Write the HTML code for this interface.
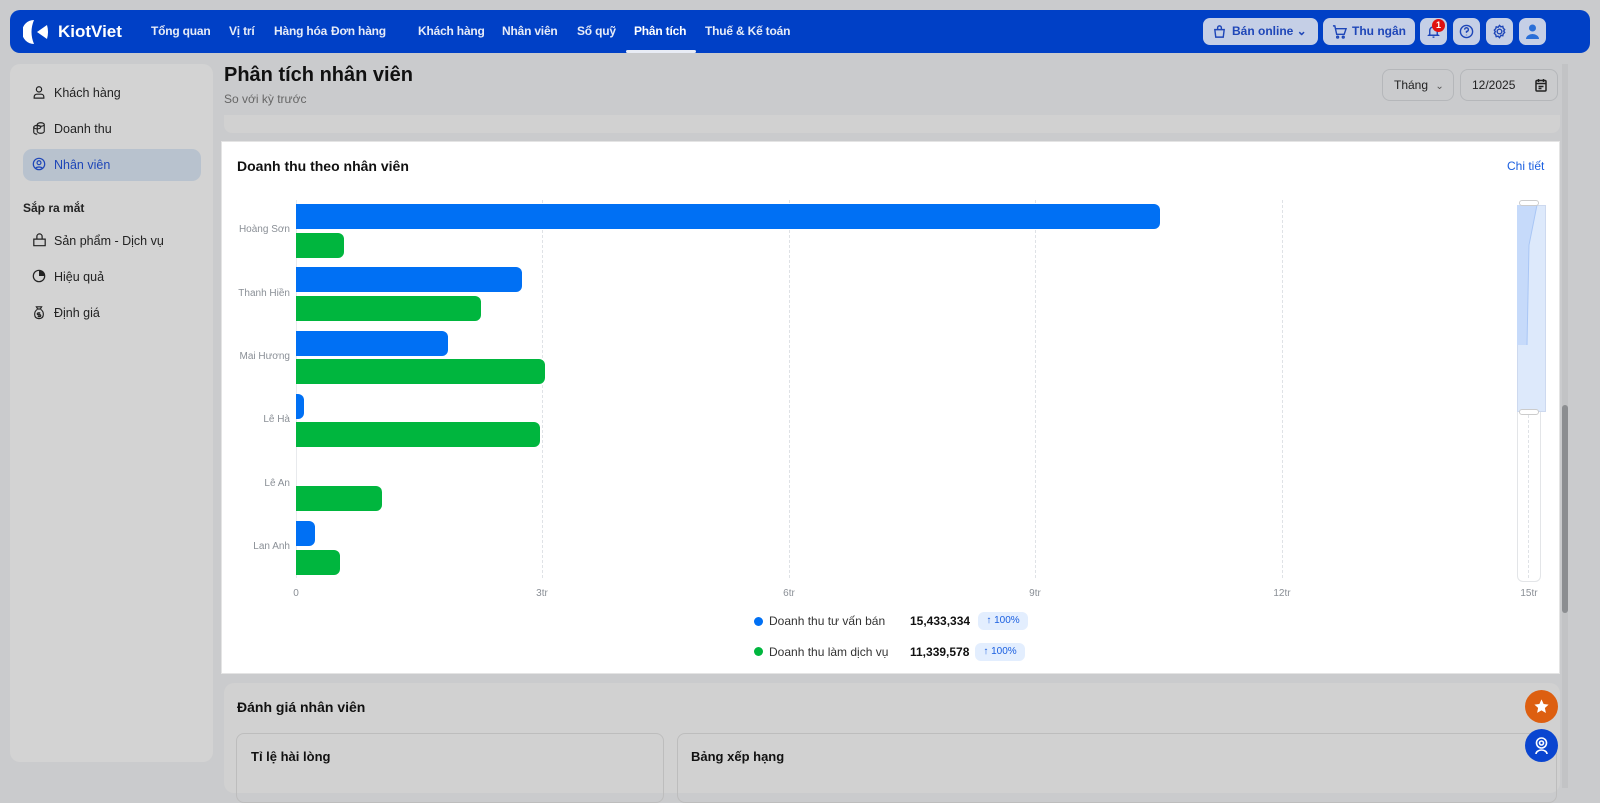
<!DOCTYPE html>
<html><head><meta charset="utf-8">
<style>
*{box-sizing:border-box;margin:0;padding:0}
body{width:1600px;height:788px;overflow:hidden;background:#cacbcd;font-family:"Liberation Sans",Arial,sans-serif;position:relative;color:#111}
.a{position:absolute}
.hdr{left:10px;top:10px;width:1580px;height:43px;background:#0040c6;border-radius:10px}
.nav{top:0;height:43px;line-height:43px;color:#e6ebf7;font-size:12px;font-weight:bold;white-space:nowrap;letter-spacing:-0.2px}
.btn{top:8px;height:27px;background:#c5cfe6;border-radius:7px;color:#1e46b8;font-size:12px;font-weight:bold;line-height:27px;white-space:nowrap}
.side{left:10px;top:64px;width:203px;height:698px;background:#d3d3d3;border-radius:10px}
.si{left:23px;font-size:12.5px;color:#222;height:32px;line-height:32px;padding-left:31px;width:178px}
.si svg{position:absolute;left:9px;top:8px}
.card{left:221px;top:141px;width:1339px;height:533px;background:#fff;border:1px solid #e4e4e4}
.grid{top:200px;width:0;height:378px;border-left:1px dashed #dfe2e6}
.bar{height:25px;border-radius:0 6px 6px 0}
.b{background:#0070f4}.g{background:#00b63e}
.lbl{width:70px;text-align:right;font-size:10px;color:#8a8f96}
.tick{top:588px;font-size:10px;color:#8a8f96;width:40px;text-align:center}
</style></head><body>
<div class="a hdr">
  <svg class="a" style="left:13px;top:8px" width="28" height="28" viewBox="0 0 28 28"><path d="M11 2 A12 12 0 1 0 11 26 Q6 14 11 2Z" fill="#fff"/><path d="M24 7 L14 14 L24 21 Q26 14 24 7Z" fill="#fff"/></svg>
  <div class="a nav" style="left:48px;font-size:17px;color:#fff;letter-spacing:0">KiotViet</div>
  <div class="a nav" style="left:141px">Tổng quan</div>
  <div class="a nav" style="left:219px">Vị trí</div>
  <div class="a nav" style="left:264px">Hàng hóa</div>
  <div class="a nav" style="left:321px">Đơn hàng</div>
  <div class="a nav" style="left:408px">Khách hàng</div>
  <div class="a nav" style="left:492px">Nhân viên</div>
  <div class="a nav" style="left:567px">Sổ quỹ</div>
  <div class="a nav" style="left:624px;color:#fff">Phân tích</div>
  <div class="a" style="left:616px;top:40px;width:70px;height:3px;background:#e8ecf5;border-radius:2px"></div>
  <div class="a nav" style="left:695px">Thuế &amp; Kế toán</div>
  <div class="a btn" style="left:1193px;width:115px;padding-left:29px">Bán online ⌄<svg class="a" style="left:9px;top:6px" width="15" height="15" viewBox="0 0 16 16" fill="none" stroke="#1e46b8" stroke-width="1.5"><path d="M3 6h10l-1 8H4z"/><path d="M6 6V4a2 2 0 0 1 4 0v2"/></svg></div>
  <div class="a btn" style="left:1313px;width:92px;padding-left:29px">Thu ngân<svg class="a" style="left:9px;top:6px" width="15" height="15" viewBox="0 0 16 16" fill="none" stroke="#1e46b8" stroke-width="1.5"><path d="M1 2h2l2 9h8l2-6H4"/><circle cx="6" cy="14" r="1"/><circle cx="12" cy="14" r="1"/></svg></div>
  <div class="a btn" style="left:1410px;width:27px"><svg class="a" style="left:6px;top:6px" width="15" height="15" viewBox="0 0 16 16" fill="none" stroke="#1e46b8" stroke-width="1.5"><path d="M4 11V7a4 4 0 0 1 8 0v4l1 1H3z"/><path d="M7 14h2"/></svg></div>
  <div class="a" style="left:1422px;top:9px;width:13px;height:13px;border-radius:50%;background:#e01010;color:#fff;font-size:9px;font-weight:bold;text-align:center;line-height:13px">1</div>
  <div class="a btn" style="left:1443px;width:27px"><svg class="a" style="left:6px;top:6px" width="15" height="15" viewBox="0 0 16 16" fill="none" stroke="#1e46b8" stroke-width="1.5"><circle cx="8" cy="8" r="6.5"/><path d="M6 6a2 2 0 1 1 2 2v1.5M8 11.5v.5"/></svg></div>
  <div class="a btn" style="left:1476px;width:27px"><svg class="a" style="left:6px;top:6px" width="15" height="15" viewBox="0 0 16 16" fill="none" stroke="#1e46b8" stroke-width="1.5"><circle cx="8" cy="8" r="2.5"/><path d="M8 1.5l1.5 1.5 2-.5.5 2 1.5 1.5-1 1.5 1 1.5-1.5 1.5-.5 2-2-.5L8 14.5l-1.5-1.5-2 .5-.5-2L2.5 10l1-2-1-1.5L4 5l.5-2 2 .5z"/></svg></div>
  <div class="a btn" style="left:1509px;width:27px"><svg class="a" style="left:5px;top:4px" width="17" height="19" viewBox="0 0 17 19"><circle cx="8.5" cy="6" r="3.5" fill="#2a6fd8"/><path d="M2 17a6.5 5 0 0 1 13 0z" fill="#2a6fd8"/></svg></div>
</div>

<div class="a side"></div>
<div class="a si" style="top:77px"><svg width="14" height="14" viewBox="0 0 16 16" fill="none" stroke="#222" stroke-width="1.4"><circle cx="8" cy="5" r="3"/><path d="M2.5 15v-1.5a3 3 0 0 1 3-3h5a3 3 0 0 1 3 3V15z"/></svg>Khách hàng</div>
<div class="a si" style="top:113px"><svg width="14" height="14" viewBox="0 0 16 16" fill="none" stroke="#222" stroke-width="1.3"><ellipse cx="10" cy="4" rx="4" ry="2"/><path d="M6 4v8c0 1 2 2 4 2s4-1 4-2V4"/><ellipse cx="6" cy="7" rx="4" ry="2"/><path d="M2 7v6c0 1 2 2 4 2"/></svg>Doanh thu</div>
<div class="a si" style="top:149px;background:#b8c2ce;border-radius:9px;color:#1e46b8;height:32px"><svg width="14" height="14" viewBox="0 0 16 16" fill="none" stroke="#1e46b8" stroke-width="1.4"><circle cx="8" cy="8" r="6.5"/><circle cx="8" cy="6.5" r="2.2"/><path d="M4 13a4.5 3 0 0 1 8 0"/></svg>Nhân viên</div>
<div class="a" style="left:23px;top:201px;font-size:12px;font-weight:bold;color:#222">Sắp ra mắt</div>
<div class="a si" style="top:225px"><svg width="15" height="14" viewBox="0 0 16 16" fill="none" stroke="#222" stroke-width="1.4"><path d="M1.5 7h13v7.5h-13z"/><path d="M5 7V4a3 3 0 0 1 6 0v3"/></svg>Sản phẩm - Dịch vụ</div>
<div class="a si" style="top:261px"><svg width="14" height="14" viewBox="0 0 16 16"><circle cx="8" cy="8" r="6.5" fill="none" stroke="#222" stroke-width="1.4"/><path d="M8 8V1.5A6.5 6.5 0 0 1 14.5 8z" fill="#222"/></svg>Hiệu quả</div>
<div class="a si" style="top:297px"><svg width="14" height="15" viewBox="0 0 16 16" fill="none" stroke="#222" stroke-width="1.3"><path d="M5 1.5h6L9.5 4h-3z"/><path d="M6 4.5C2 7 1.5 15 8 15s6-8 2-10.5"/><path d="M9.5 8.5H7a1 1 0 0 0 0 2h2a1 1 0 0 1 0 2H6.5M8 7.5v6"/></svg>Định giá</div>

<div class="a" style="left:224px;top:64px;font-size:20px;font-weight:bold;color:#111">Phân tích nhân viên</div>
<div class="a" style="left:224px;top:92px;font-size:12px;color:#666">So với kỳ trước</div>
<div class="a" style="left:1382px;top:69px;width:72px;height:32px;border:1px solid #b5b7ba;border-radius:8px;font-size:12px;line-height:30px;padding-left:11px;color:#222">Tháng <span style="font-size:10px;color:#555;margin-left:4px">⌄</span></div>
<div class="a" style="left:1460px;top:69px;width:98px;height:32px;border:1px solid #b5b7ba;border-radius:8px;font-size:12px;line-height:30px;padding-left:11px;color:#222">12/2025<svg class="a" style="left:74px;top:8px" width="12" height="14" viewBox="0 0 12 14" fill="none" stroke="#222" stroke-width="1.5"><rect x="1" y="2.5" width="10" height="10.5" rx="1"/><path d="M1 5.5h10M3.5 1v3M8.5 1v3M3.5 8.5h5M3.5 10.5h3"/></svg></div>
<div class="a" style="left:224px;top:115px;width:1336px;height:18px;background:#d1d1d1;border-radius:0 0 8px 8px"></div>

<div class="a card"></div>
<div class="a" style="left:237px;top:158px;font-size:14px;font-weight:bold;color:#111">Doanh thu theo nhân viên</div>
<div class="a" style="left:1507px;top:159px;font-size:12px;color:#1a5fe0">Chi tiết</div>

<div class="a grid" style="left:296px;border-left:1px solid #e8eaed"></div>
<div class="a grid" style="left:542px"></div>
<div class="a grid" style="left:789px"></div>
<div class="a grid" style="left:1035px"></div>
<div class="a grid" style="left:1282px"></div>
<div class="a grid" style="left:1528px"></div>

<div class="a lbl" style="left:220px;top:224px">Hoàng Sơn</div>
<div class="a lbl" style="left:220px;top:288px">Thanh Hiền</div>
<div class="a lbl" style="left:220px;top:351px">Mai Hương</div>
<div class="a lbl" style="left:220px;top:414px">Lê Hà</div>
<div class="a lbl" style="left:220px;top:478px">Lê An</div>
<div class="a lbl" style="left:220px;top:541px">Lan Anh</div>

<div class="a bar b" style="left:296px;top:204px;width:864px"></div>
<div class="a bar g" style="left:296px;top:233px;width:48px"></div>
<div class="a bar b" style="left:296px;top:267px;width:226px"></div>
<div class="a bar g" style="left:296px;top:296px;width:185px"></div>
<div class="a bar b" style="left:296px;top:331px;width:152px"></div>
<div class="a bar g" style="left:296px;top:359px;width:249px"></div>
<div class="a bar b" style="left:296px;top:394px;width:8px"></div>
<div class="a bar g" style="left:296px;top:422px;width:244px"></div>
<div class="a bar g" style="left:296px;top:486px;width:86px"></div>
<div class="a bar b" style="left:296px;top:521px;width:19px"></div>
<div class="a bar g" style="left:296px;top:550px;width:44px"></div>

<div class="a tick" style="left:276px">0</div>
<div class="a tick" style="left:522px">3tr</div>
<div class="a tick" style="left:769px">6tr</div>
<div class="a tick" style="left:1015px">9tr</div>
<div class="a tick" style="left:1262px">12tr</div>
<div class="a tick" style="left:1509px">15tr</div>

<div class="a" style="left:1517px;top:205px;width:24px;height:377px;border:1px solid #e3e5e8;border-radius:0 0 6px 6px"></div>
<div class="a" style="left:1517px;top:205px;width:29px;height:207px;background:#dde9fb;border:1px solid #cdd9ef"></div>
<svg class="a" style="left:1517px;top:205px" width="24" height="140"><path d="M0 0H20L12 40L10 140H0Z" fill="#c6dafa"/><path d="M20 0L12 40L10 140" stroke="#a9c6f5" fill="none"/></svg>
<div class="a" style="left:1519px;top:200px;width:20px;height:6px;background:#fff;border:1px solid #ccc;border-radius:3px"></div>
<div class="a" style="left:1519px;top:409px;width:20px;height:6px;background:#fff;border:1px solid #ccc;border-radius:3px"></div>

<div class="a" style="left:754px;top:617px;width:9px;height:9px;border-radius:50%;background:#0070f4"></div>
<div class="a" style="left:769px;top:614px;font-size:12px;color:#333">Doanh thu tư vấn bán</div>
<div class="a" style="left:910px;top:614px;font-size:12px;font-weight:bold;color:#111">15,433,334</div>
<div class="a" style="left:978px;top:612px;width:50px;height:18px;background:#e3eefe;border-radius:6px;font-size:10px;color:#1a5fe0;text-align:center;line-height:18px">↑ 100%</div>
<div class="a" style="left:754px;top:647px;width:9px;height:9px;border-radius:50%;background:#00b63e"></div>
<div class="a" style="left:769px;top:645px;font-size:12px;color:#333">Doanh thu làm dịch vụ</div>
<div class="a" style="left:910px;top:645px;font-size:12px;font-weight:bold;color:#111">11,339,578</div>
<div class="a" style="left:975px;top:643px;width:50px;height:18px;background:#e3eefe;border-radius:6px;font-size:10px;color:#1a5fe0;text-align:center;line-height:18px">↑ 100%</div>

<div class="a" style="left:224px;top:683px;width:1336px;height:110px;background:#d1d1d1;border-radius:10px"></div>
<div class="a" style="left:237px;top:699px;font-size:14px;font-weight:bold;color:#111">Đánh giá nhân viên</div>
<div class="a" style="left:236px;top:733px;width:428px;height:70px;border:1px solid #bdbdbd;border-radius:8px"></div>
<div class="a" style="left:251px;top:749px;font-size:13px;font-weight:bold;color:#111">Tỉ lệ hài lòng</div>
<div class="a" style="left:677px;top:733px;width:880px;height:70px;border:1px solid #bdbdbd;border-radius:8px"></div>
<div class="a" style="left:691px;top:749px;font-size:13px;font-weight:bold;color:#111">Bảng xếp hạng</div>

<div class="a" style="left:1562px;top:64px;width:6px;height:724px;background:#c2c3c5"></div>
<div class="a" style="left:1562px;top:405px;width:6px;height:208px;background:#8c8e91;border-radius:3px"></div>

<div class="a" style="left:1525px;top:690px;width:33px;height:33px;border-radius:50%;background:#dd5f10"><svg class="a" style="left:8px;top:8px" width="17" height="17" viewBox="0 0 24 24"><path d="M12 2l3 6.5 7 .8-5.2 4.8 1.4 7L12 17.5 5.8 21l1.4-7L2 9.3l7-.8z" fill="#fff"/></svg></div>
<div class="a" style="left:1525px;top:729px;width:33px;height:33px;border-radius:50%;background:#0a45d0"><svg class="a" style="left:8px;top:7px" width="17" height="19" viewBox="0 0 17 19" fill="none" stroke="#fff" stroke-width="1.6"><circle cx="8.5" cy="7" r="5"/><circle cx="8.5" cy="7" r="2"/><path d="M3 18a5.5 4 0 0 1 11 0"/></svg></div>
</body></html>
